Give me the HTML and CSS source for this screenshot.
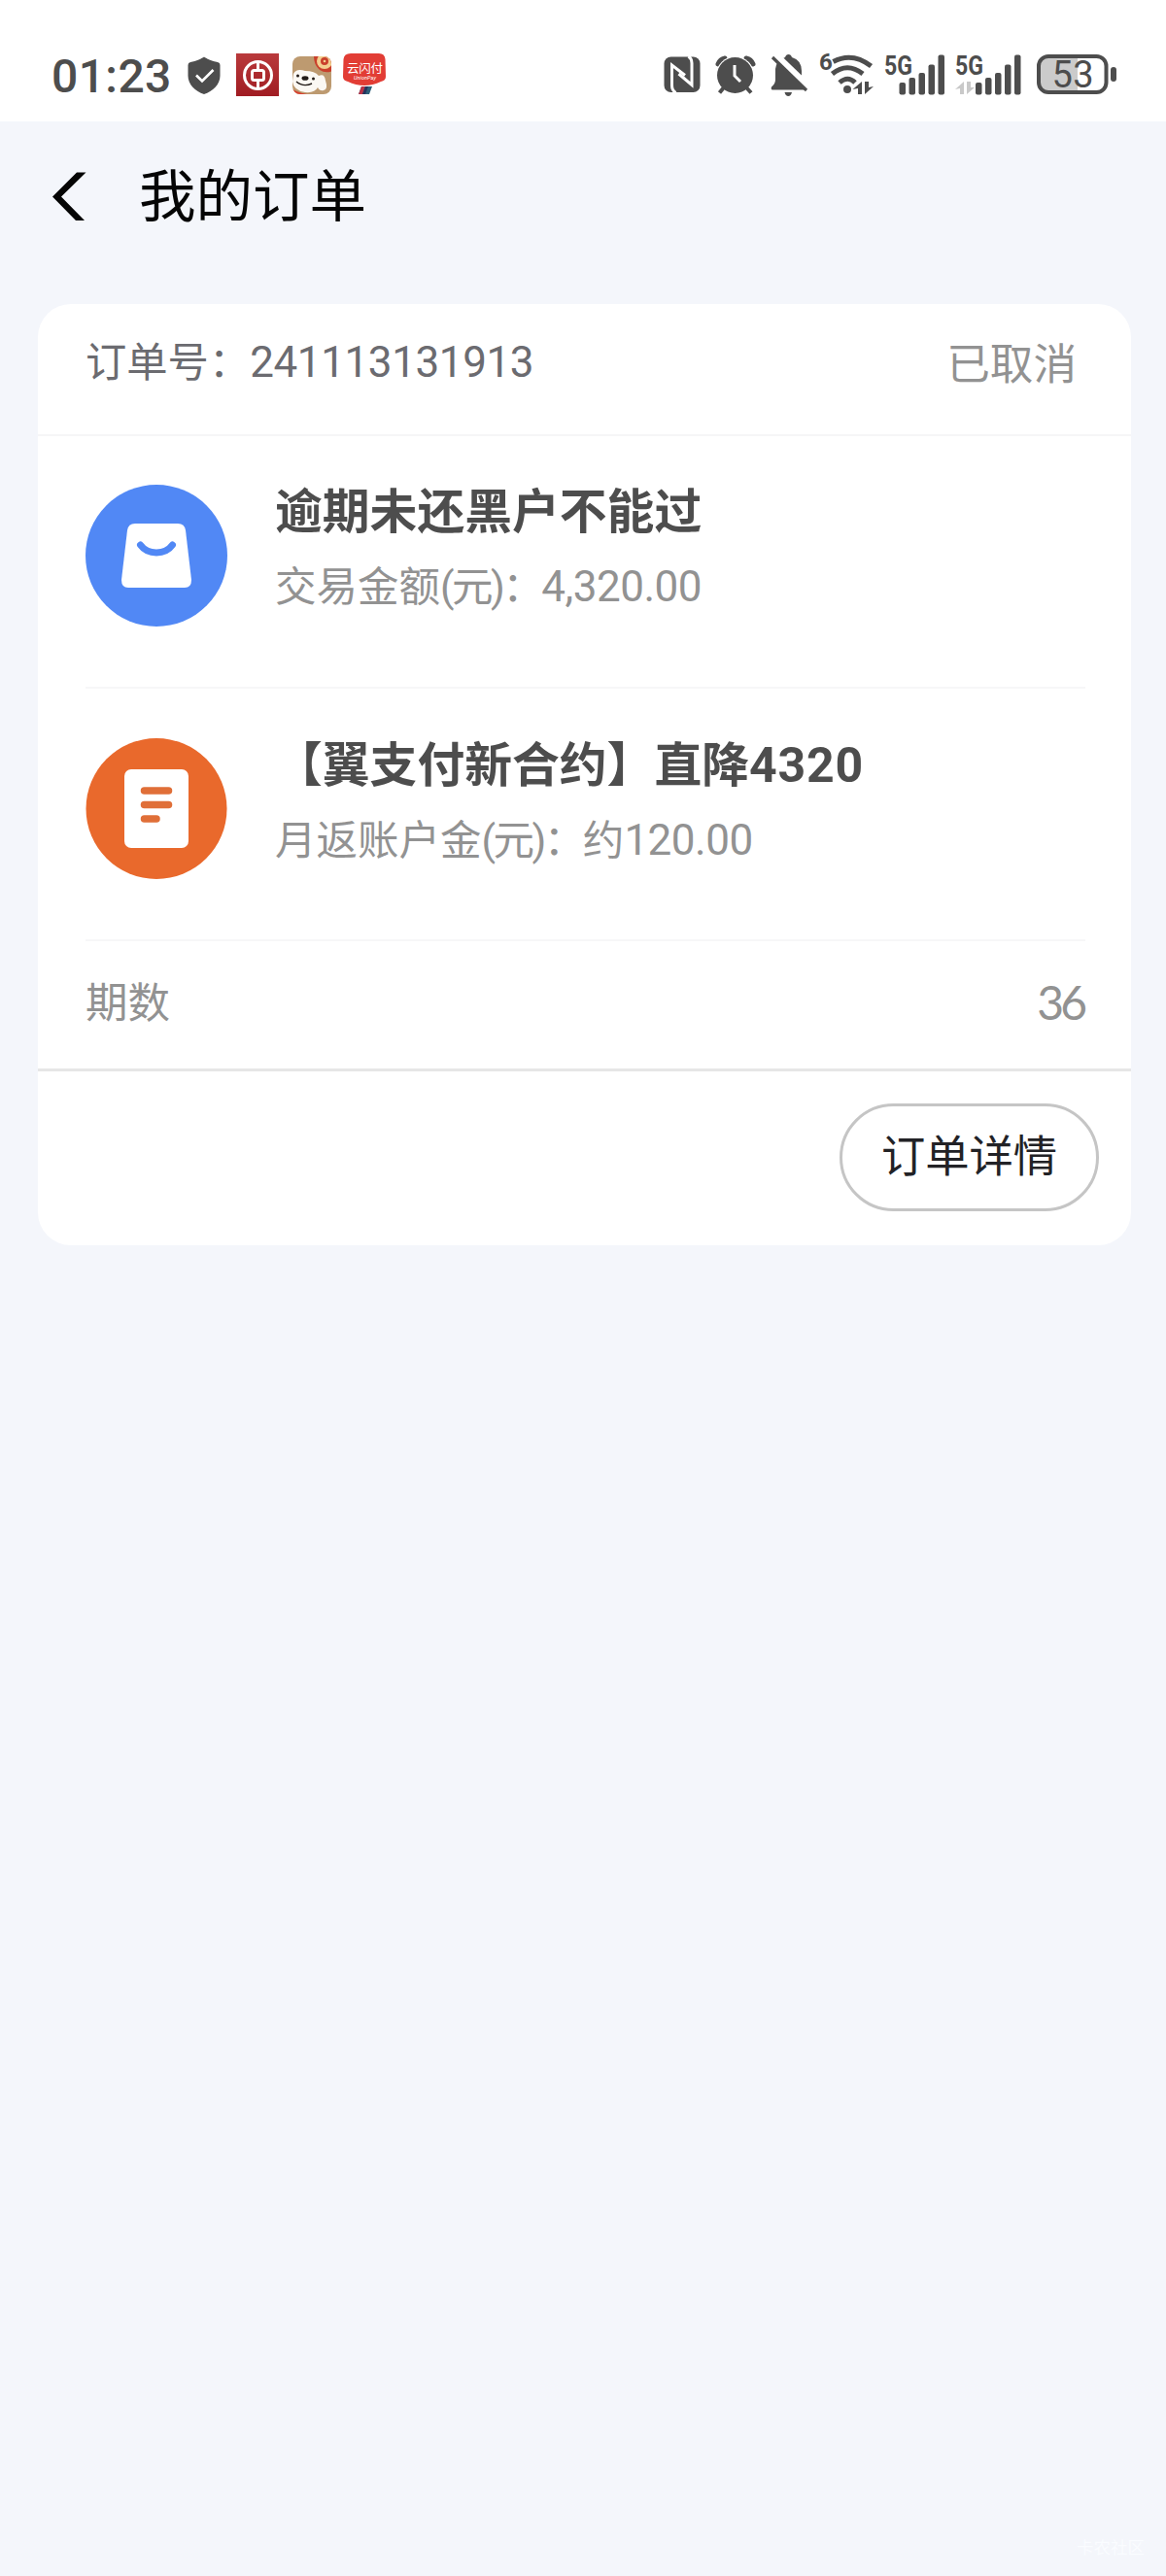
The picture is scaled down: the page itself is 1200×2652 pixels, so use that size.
FILE: index.html
```
<!DOCTYPE html>
<html lang="zh-CN">
<head>
  <meta charset="UTF-8">
  <title>我的订单</title>
  <link rel="stylesheet" href="styles.css">
</head>
<body>
  <div class="status-bar">
    <div class="status-left">
      <span class="time">01:23</span>
      <svg class="shield" width="34" height="40" viewBox="0 0 34 40">
        <path d="M17 0.5C19 2 25 5 31 6Q33.5 6.5 33.5 9V20C33.500 29 26 36 17 39C8 36 0.500 29 0.500 20V9Q0.500 6.500 3 6C9 5 15 2 17 0.500Z" fill="#4d4d4d"/>
        <path d="M9 19.500L15 25.500L26.500 14" fill="none" stroke="#fff" stroke-width="2.600"/>
      </svg>
      <svg class="bank" width="44" height="44" viewBox="0 0 44 44">
        <defs>
          <linearGradient id="bankRed" x1="0" y1="0" x2="0" y2="1">
            <stop offset="0" stop-color="#b93a3c"/>
            <stop offset="1" stop-color="#a01c22"/>
          </linearGradient>
        </defs>
        <rect width="44" height="44" fill="url(#bankRed)"/>
        <g fill="none" stroke="#fff" stroke-width="3">
          <circle cx="22.500" cy="22.500" r="14"/>
          <rect x="16.500" y="17.500" width="12" height="10" rx="2"/>
          <path d="M22.500 8V17M22.500 28V37"/>
        </g>
      </svg>
      <svg class="jd" width="42" height="40" viewBox="0 0 42 40">
        <defs><clipPath id="jdClip"><rect x="1" y="0" width="40" height="39" rx="8"/></clipPath></defs>
        <g clip-path="url(#jdClip)">
          <rect width="42" height="40" fill="#bd9a70"/>
          <path d="M1 34Q10 39 20 39H1Z" fill="#d8402f"/>
          <path d="M23 0H42V15Q35 18 29 14Q23 9 23 0Z" fill="#c9402c"/>
          <circle cx="34" cy="5" r="8" fill="#f3cf90"/>
          <circle cx="34" cy="5" r="4" fill="#c9402c"/>
          <circle cx="34" cy="5" r="1.300" fill="#f3cf90"/>
          <path d="M2 18Q5 12 14 15Q24 15 28 20Q34 17 35 25Q38 34 33 35Q29 36 27 32Q24 38 14 37Q2 35 1 26Z" fill="#fbf8f3"/>
          <ellipse cx="14" cy="22.500" rx="3.500" ry="2.300" fill="#221b17"/>
          <circle cx="6.500" cy="20" r="1.500" fill="#221b17"/>
          <circle cx="22.500" cy="23" r="1.500" fill="#221b17"/>
          <path d="M5 26Q12 32 21 28" fill="none" stroke="#221b17" stroke-width="1.400"/>
        </g>
      </svg>
      <svg class="unionpay" width="46" height="44" viewBox="0 0 46 44">
        <path d="M9 0H38Q44 0 44.500 6L45 24Q45 28 40 29Q32 33 23 33Q14 33 6 29Q1 28 1 24L1.500 6Q2 0 9 0Z" fill="#e23d35"/>
        <path d="M20 34H31L28 42H17Z" fill="#2d5f79"/>
        <path d="M20 34H24L21 42H17Z" fill="#b83246"/>
        <path d="M24 34H27L24 42H21Z" fill="#26335c"/>
        <text class="unionpay-cn" x="5" y="19.500" textLength="37">云闪付</text>
        <text class="unionpay-en" x="12" y="27" textLength="23">UnionPay</text>
      </svg>
    </div>
    <div class="status-right">
      <svg class="nfc" width="38" height="38" viewBox="0 0 38 38">
        <rect x="0.500" y="0.500" width="37" height="36.500" rx="7" fill="#4d4d4d"/>
        <g fill="none" stroke="#fff" stroke-width="3">
          <path d="M12.500 37.500Q8.500 35 8.500 30V9L22 19.500"/>
          <path d="M25.500 0Q29 2.500 29 7V29.500L15.500 18"/>
        </g>
      </svg>
      <svg class="alarm" width="42" height="42" viewBox="0 0 42 42">
        <path d="M3 9Q5 4 10 3M32 3Q37 4 39 9" fill="none" stroke="#4d4d4d" stroke-width="5" stroke-linecap="round"/>
        <circle cx="20.500" cy="20.500" r="19.500" fill="#fff"/>
        <path d="M9 33L4.500 38.500M32 33L37 38.500" stroke="#4d4d4d" stroke-width="4"/>
        <circle cx="20.500" cy="20.500" r="18.500" fill="#4d4d4d"/>
        <path d="M20 10V21L26 27" fill="none" stroke="#fff" stroke-width="3"/>
      </svg>
      <svg class="bell" width="40" height="44" viewBox="0 0 40 44">
        <path d="M15 3Q16 0 18.500 0Q21 0 22 3Q32 6 32 17V26Q32 30 35.500 33.500Q37 36 35 36.500H2Q0 36 1 33.500Q5 30 5 26V15Q6 6 15 3Z" fill="#4d4d4d"/>
        <path d="M14.500 39H22Q21 43 18.300 43Q15.500 43 14.500 39Z" fill="#4d4d4d"/>
        <path d="M3.500 -1L40 34" stroke="#fff" stroke-width="7"/>
        <path d="M2 3L37 37" stroke="#4d4d4d" stroke-width="3.200"/>
      </svg>
      <svg class="wifi" width="56" height="46" viewBox="0 0 56 46">
        <text class="wifi-num" x="-1" y="18">6</text>
        <g fill="none" stroke="#4d4d4d" stroke-width="5">
          <path d="M13.500 9.500Q33 -1 52.500 14"/>
          <path d="M12.500 22Q28 9.500 44 22"/>
          <path d="M20 31Q28.500 23.500 36 31"/>
        </g>
        <circle cx="28" cy="38" r="4" fill="#4d4d4d"/>
        <path d="M33.500 38L43 30V43H39V37ZM46 30H50V36L55 35L46 43Z" fill="#4d4d4d"/>
      </svg>
      <svg class="signal" width="64" height="44" viewBox="0 0 64 44">
        <text class="net" x="-1" y="20.500" textLength="29" lengthAdjust="spacingAndGlyphs">5G</text>
        <g fill="#4d4d4d">
          <rect x="14.500" y="29" width="6.500" height="12.500" rx="2"/>
          <rect x="24.500" y="24" width="6.500" height="17.500" rx="2"/>
          <rect x="34.500" y="19" width="6.500" height="22.500" rx="2"/>
          <rect x="44.500" y="10.500" width="6.500" height="31" rx="2"/>
          <rect x="54.500" y="0.500" width="6.500" height="41" rx="2"/>
        </g>
      </svg>
      <svg class="signal2" width="70" height="44" viewBox="0 0 70 44">
        <text class="net" x="0" y="20.500" textLength="29" lengthAdjust="spacingAndGlyphs">5G</text>
        <path d="M0 36L9 28V41H5V35ZM12 28H16V34L20 34L12 41Z" fill="#c9c9c9"/>
        <g fill="#4d4d4d">
          <rect x="21" y="29" width="6.500" height="12.500" rx="2"/>
          <rect x="31" y="24" width="6.500" height="17.500" rx="2"/>
          <rect x="41" y="19" width="6.500" height="22.500" rx="2"/>
          <rect x="51" y="10.500" width="6.500" height="31" rx="2"/>
          <rect x="61" y="0.500" width="6.500" height="41" rx="2"/>
        </g>
      </svg>
      <svg class="battery" width="84" height="42" viewBox="0 0 84 42">
        <path d="M42 2H12Q2 2 2 12V29Q2 39 12 39H42Z" fill="#cbcbcb"/>
        <rect x="2" y="2" width="69.500" height="37" rx="10" fill="none" stroke="#4d4d4d" stroke-width="4"/>
        <rect x="76" y="13" width="6" height="15" rx="3" fill="#4d4d4d"/>
        <text class="battery-num" x="15.500" y="34" textLength="43">53</text>
      </svg>
    </div>
  </div>

  <div class="nav">
    <svg class="back" width="36" height="52" viewBox="0 0 36 52">
      <path d="M26 0.500H35.500L10 25.500L34 50H25L1 25.500Z" fill="#050505"/>
    </svg>
    <h1>我的订单</h1>
  </div>

  <div class="card">
    <div class="card-head">
      <div class="order-no">订单号：<span class="digits">241113131913</span></div>
      <div class="state">已取消</div>
    </div>

    <div class="item">
      <svg class="item-icon" width="146" height="146" viewBox="0 0 146 146">
        <circle cx="73" cy="73" r="73" fill="#5188f5"/>
        <path d="M51 40H95Q102 40 103 47L109 98Q109 106 102 106H44Q37 106 37 98L43 47Q44 40 51 40Z" fill="#fff"/>
        <path d="M56.500 62C64 72.500 82 72.500 89.500 62" fill="none" stroke="#5188f5" stroke-width="7" stroke-linecap="round"/>
      </svg>
      <div class="item-text">
        <h2>逾期未还黑户不能过</h2>
        <p>交易金额<span class="unit">(元)：</span><span class="amount">4,320.00</span></p>
      </div>
    </div>

    <div class="item">
      <svg class="item-icon" width="146" height="146" viewBox="0 0 146 146">
        <circle cx="73" cy="73.500" r="72.500" fill="#e9692c"/>
        <rect x="40" y="33" width="66" height="81" rx="7" fill="#fff"/>
        <g stroke="#e06f38" stroke-width="7.500" stroke-linecap="round">
          <path d="M60.500 55H85.500"/>
          <path d="M60.500 69.500H85.500"/>
          <path d="M60.500 84H73"/>
        </g>
      </svg>
      <div class="item-text">
        <h2>【翼支付新合约】直降<span class="bold-num">4320</span></h2>
        <p>月返账户金<span class="unit">(元)：</span>约<span class="amount">120.00</span></p>
      </div>
    </div>

    <div class="periods">
      <span>期数</span>
      <span class="periods-num">36</span>
    </div>

    <div class="card-foot">
      <button class="detail-button">订单详情</button>
    </div>
  </div>

  <div class="watermark">卡农社区</div>
</body>
</html>
```
FILE: styles.css
```
* {
  box-sizing: border-box;
}

body {
  margin: 0;
  height: 2652px;
  display: flex;
  flex-direction: column;
  background-color: #f4f6fb;
  font-family: Roboto, "Noto Sans CJK SC", sans-serif;
}

h1, h2, p {
  margin: 0;
}

svg {
  display: block;
  flex-shrink: 0;
  overflow: visible;
}

/* status bar */
.status-bar {
  height: 125px;
  padding: 54px 49px 0 53px;
  display: flex;
  justify-content: space-between;
  background-color: #fff;
}

.status-left,
.status-right {
  display: flex;
  height: 46px;
  align-items: flex-start;
}

.time {
  width: 124px;
  font-size: 48px;
  line-height: 49px;
  font-weight: 500;
  letter-spacing: 0.4px;
  color: #4d4d4d;
}

.shield {
  margin: 4px 0 0 16px;
}

.bank {
  margin: 1px 0 0 16px;
}

.jd {
  margin: 4px 0 0 13px;
}

.unionpay {
  margin: 1px 0 0 10px;
}

.unionpay-cn {
  font-size: 12.5px;
  fill: #fff;
}

.unionpay-en {
  font-size: 5.5px;
  font-style: italic;
  fill: #fff;
}

.nfc {
  margin-top: 4px;
}

.alarm {
  margin: 3px 0 0 15px;
}

/* the slash is wider than the bell, keep it inside */
.bell {
  margin: 2px 0 0 15px;
  overflow: hidden;
}

.wifi {
  margin: 0 0 0 11px;
}

.wifi-num {
  font-size: 24px;
  font-weight: 700;
  fill: #4d4d4d;
}

.signal {
  margin: 2px 0 0 11px;
}

.signal2 {
  margin: 2px 0 0 8px;
}

.net {
  font-size: 28px;
  font-weight: 700;
  fill: #4d4d4d;
}

.battery {
  margin: 2px 0 0 14px;
}

.battery-num {
  font-size: 38px;
  font-weight: 400;
  fill: #4d4d4d;
}

/* title */
.nav {
  height: 188px;
  padding: 52px 0 0 53px;
  display: flex;
  align-items: flex-start;
}

.nav h1 {
  margin: -14px 0 0 54px;
  font-size: 58.5px;
  line-height: 80px;
  font-weight: 400;
  color: #050505;
}

/* order card */
.card {
  width: 1125px;
  height: 969px;
  margin-left: 39px;
  border-radius: 34px;
  background-color: #fff;
}

.card-head {
  height: 136px;
  padding: 28px 56px 0 49px;
  display: flex;
  justify-content: space-between;
  border-bottom: 2px solid #f6f6f7;
}

.order-no {
  font-size: 42.3px;
  line-height: 65px;
  color: #6b6b70;
}

.order-no .digits {
  font-size: 44px;
  letter-spacing: -0.4px;
}

.state {
  font-size: 44.6px;
  line-height: 70px;
  color: #929292;
}

.item {
  height: 260px;
  margin: 0 47px 0 49px;
  padding-top: 50px;
  display: flex;
  border-bottom: 2px solid #f7f7f8;
}

.item-text {
  margin-left: 49px;
}

.item-text h2 {
  margin-top: -7px;
  font-size: 48.8px;
  line-height: 72px;
  font-weight: 700;
  color: #4d4d4d;
  white-space: nowrap;
}

.bold-num {
  font-size: 50px;
  letter-spacing: 0.8px;
}

.item-text p {
  margin-top: 8px;
  font-size: 42.5px;
  line-height: 64px;
  color: #929292;
  white-space: nowrap;
}

.unit {
  letter-spacing: -2.5px;
}

.amount {
  font-size: 44px;
  letter-spacing: -0.5px;
}

.periods {
  height: 131px;
  padding: 0 49px 2px 49px;
  display: flex;
  justify-content: space-between;
  align-items: center;
  font-size: 43.5px;
  line-height: 64px;
  color: #929292;
}

.periods-num {
  padding-bottom: 3px;
  font-family: Lato, sans-serif;
  font-size: 48px;
  letter-spacing: -4px;
}

.card-foot {
  height: 182px;
  padding: 33px 33px 0 0;
  display: flex;
  justify-content: flex-end;
  align-items: flex-start;
  border-top: 3px solid #e6e6e6;
}

.detail-button {
  width: 267px;
  height: 111px;
  padding: 0;
  border: 3px solid #c5c5c5;
  border-radius: 56px;
  background-color: #fff;
  font-family: inherit;
  font-size: 45.3px;
  line-height: 66px;
  color: #222226;
}

.watermark {
  margin: auto 22px 16px auto;
  font-size: 17.5px;
  line-height: 26px;
  color: #fafcff;
}
```
